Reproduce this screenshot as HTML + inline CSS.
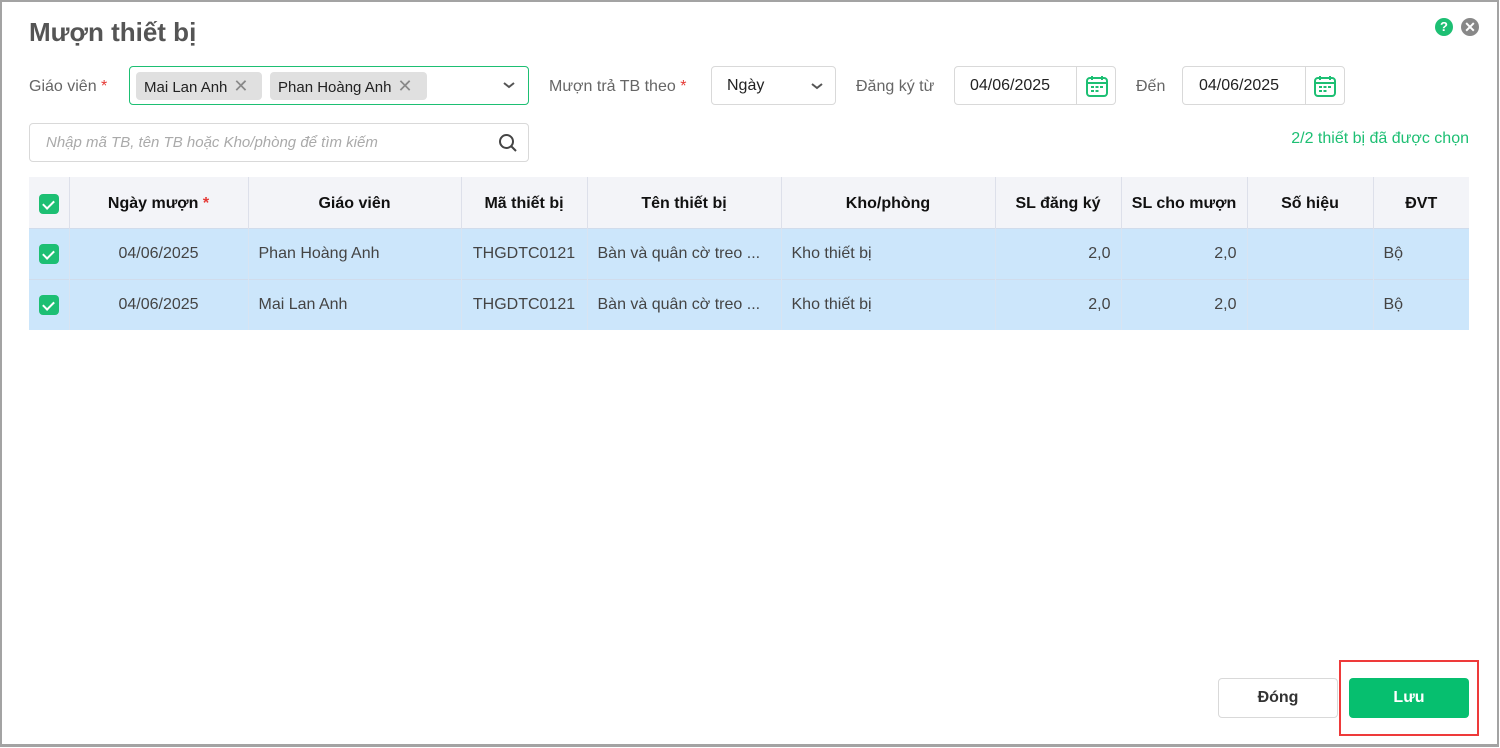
<!DOCTYPE html>
<html><head><meta charset="utf-8"><style>
*{box-sizing:border-box;margin:0;padding:0}
body{width:1500px;height:748px;background:#fff;font-family:"Liberation Sans",sans-serif;position:relative;overflow:hidden;color:#333}
.frame{position:absolute;left:0;top:0;width:1499px;height:747px;border:2px solid #a3a3a3;border-bottom-width:3px}
.a{position:absolute}
.lbl{font-size:16px;color:#666}
.req{color:#e53935}
.box{border:1px solid #d9d9d9;border-radius:4px;background:#fff}
.tag{position:absolute;top:5px;height:28px;background:#e0e0e0;border-radius:4px;font-size:15px;color:#222;line-height:28px;padding-left:8px}
.tag span{color:#888;font-size:18px;margin-left:6px}
table{position:absolute;left:29px;top:177px;width:1440px;border-collapse:collapse;font-size:16px}
th{background:#f3f4f8;height:51px;font-weight:bold;color:#111;border-right:1px solid #dde0ea;font-size:16px;padding-top:3px}
td{background:#cce6fb;height:51px;border-right:1px solid #d8e4f2;border-top:1px solid #d0dcec;color:#444;padding:0 10px}
th:last-child,td:last-child{border-right:none}
.cb{display:inline-block;width:20px;height:20px;background:#1dbf73;border-radius:4px;vertical-align:middle;position:relative}
.cb:after{content:"";position:absolute;left:6px;top:4px;width:5px;height:9px;border:solid #fff;border-width:0 2px 2px 0;transform:rotate(45deg)}
.r{text-align:right}.c{text-align:center}
</style></head><body>
<div class="frame"></div>
<div class="a" style="left:29px;top:17px;font-size:26px;font-weight:bold;color:#555">Mượn thiết bị</div>
<div class="a" style="left:1435px;top:18px;width:18px;height:18px;border-radius:50%;background:#1dbf73;color:#fff;font-size:13px;font-weight:bold;text-align:center;line-height:18px">?</div>
<div class="a" style="left:1461px;top:18px;width:18px;height:18px;border-radius:50%;background:#888;color:#fff;font-size:14px;font-weight:bold;text-align:center;line-height:18px">✕</div>

<div class="a lbl" style="left:29px;top:78px">Giáo viên <span class="req">*</span></div>
<div class="a box" style="left:129px;top:66px;width:400px;height:39px;border-color:#1dbf73">
 <div class="tag" style="left:6px;width:126px">Mai Lan Anh<span>✕</span></div>
 <div class="tag" style="left:140px;width:157px">Phan Hoàng Anh<span>✕</span></div>
 <svg class="a" style="left:372px;top:13px" width="14" height="10"><path d="M2 3l5 4 5-4" stroke="#555" stroke-width="2" fill="none"/></svg>
</div>
<div class="a lbl" style="left:549px;top:78px">Mượn trả TB theo <span class="req">*</span></div>
<div class="a box" style="left:711px;top:66px;width:125px;height:39px;font-size:16px;color:#222;padding:10px 15px">Ngày
 <svg class="a" style="left:98px;top:14px" width="14" height="10"><path d="M2 3l5 4 5-4" stroke="#555" stroke-width="2" fill="none"/></svg></div>
<div class="a lbl" style="left:856px;top:78px">Đăng ký từ</div>
<div class="a box" style="left:954px;top:66px;width:162px;height:39px;font-size:16px;color:#222;padding:10px 15px">04/06/2025</div>
<div class="a lbl" style="left:1136px;top:78px">Đến</div>
<div class="a box" style="left:1182px;top:66px;width:163px;height:39px;font-size:16px;color:#222;padding:10px 16px">04/06/2025</div>
<div class="a" style="left:1076px;top:67px;width:1px;height:38px;background:#d9d9d9"></div>
<div class="a" style="left:1305px;top:67px;width:1px;height:38px;background:#d9d9d9"></div>
<svg class="a" style="left:1085px;top:74px" width="24" height="24"><g stroke="#1dbf73" stroke-width="2" fill="none"><rect x="2" y="4" width="20" height="18" rx="3"/><path d="M2 9h20M7 2v4M17 2v4"/></g><g fill="#1dbf73"><rect x="6" y="12" width="3" height="2"/><rect x="10.5" y="12" width="3" height="2"/><rect x="15" y="12" width="3" height="2"/><rect x="6" y="16" width="3" height="2"/><rect x="10.5" y="16" width="3" height="2"/></g></svg>
<svg class="a" style="left:1313px;top:74px" width="24" height="24"><g stroke="#1dbf73" stroke-width="2" fill="none"><rect x="2" y="4" width="20" height="18" rx="3"/><path d="M2 9h20M7 2v4M17 2v4"/></g><g fill="#1dbf73"><rect x="6" y="12" width="3" height="2"/><rect x="10.5" y="12" width="3" height="2"/><rect x="15" y="12" width="3" height="2"/><rect x="6" y="16" width="3" height="2"/><rect x="10.5" y="16" width="3" height="2"/></g></svg>

<div class="a box" style="left:29px;top:123px;width:500px;height:39px;padding:10px 16px;font-size:15px;font-style:italic;color:#aaa">Nhập mã TB, tên TB hoặc Kho/phòng để tìm kiếm</div>
<svg class="a" style="left:498px;top:133px" width="20" height="20"><circle cx="8.5" cy="8.5" r="6.5" stroke="#444" stroke-width="2" fill="none"/><path d="M13.5 13.5l4.5 4.5" stroke="#444" stroke-width="2"/></svg>
<div class="a" style="right:31px;top:130px;font-size:16px;color:#1dbf73">2/2 thiết bị đã được chọn</div>

<table>
<tr><th style="width:40px"><span class="cb"></span></th><th style="width:179px">Ngày mượn <span class="req">*</span></th><th style="width:213px">Giáo viên</th><th style="width:126px">Mã thiết bị</th><th style="width:194px">Tên thiết bị</th><th style="width:214px">Kho/phòng</th><th style="width:126px">SL đăng ký</th><th style="width:126px">SL cho mượn</th><th style="width:126px">Số hiệu</th><th>ĐVT</th></tr>
<tr><td class="c" style="padding:0"><span class="cb"></span></td><td class="c">04/06/2025</td><td>Phan Hoàng Anh</td><td class="c">THGDTC0121</td><td>Bàn và quân cờ treo ...</td><td>Kho thiết bị</td><td class="r">2,0</td><td class="r">2,0</td><td></td><td>Bộ</td></tr>
<tr><td class="c" style="padding:0"><span class="cb"></span></td><td class="c">04/06/2025</td><td>Mai Lan Anh</td><td class="c">THGDTC0121</td><td>Bàn và quân cờ treo ...</td><td>Kho thiết bị</td><td class="r">2,0</td><td class="r">2,0</td><td></td><td>Bộ</td></tr>
</table>

<div class="a box" style="left:1218px;top:678px;width:120px;height:40px;text-align:center;line-height:38px;font-size:16px;font-weight:bold;color:#333">Đóng</div>
<div class="a" style="left:1349px;top:678px;width:120px;height:40px;background:#06bf6f;border-radius:4px;text-align:center;line-height:40px;font-size:16px;font-weight:bold;color:#fff">Lưu</div>
<div class="a" style="left:1339px;top:660px;width:140px;height:76px;border:2px solid #ee3a3a"></div>
</body></html>
